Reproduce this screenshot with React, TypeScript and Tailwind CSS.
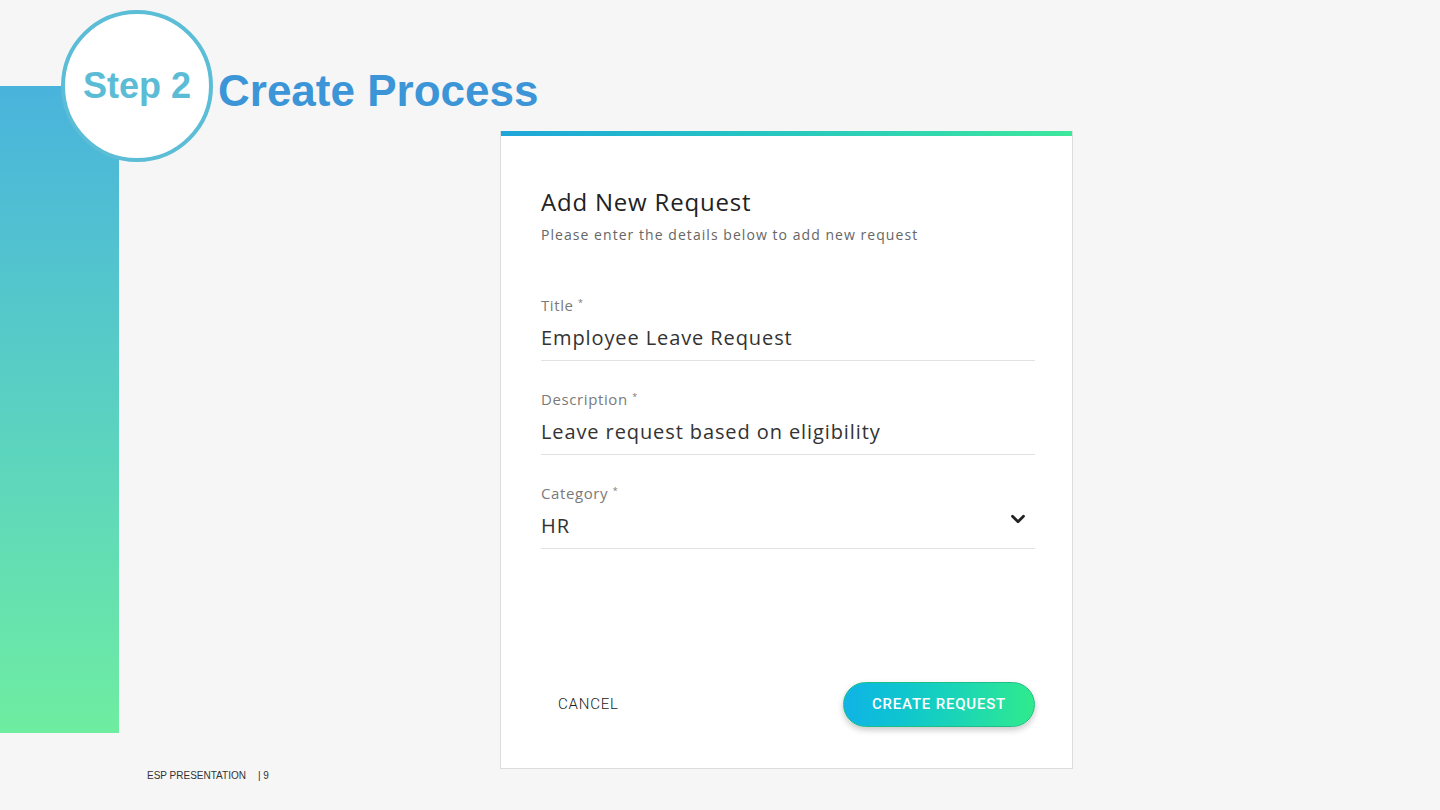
import { FiChevronDown } from "react-icons/fi";

const Field = ({ label, value, select }: { label: string; value: string; select?: boolean }) => {
  return (
    <div className="flex flex-col border-b border-[#e2e2e2] pb-[9px]">
      <span className="text-[15px] leading-[20px] tracking-[0.6px] text-[#7a7a7a]">
        {label} <span className="relative -top-[5px] text-[9px]">*</span>
      </span>
      <div className="mt-[7px] flex items-center justify-between">
        <span className="text-[20px] leading-[26px] tracking-[0.9px] text-[#333]">{value}</span>
        {select && <FiChevronDown className="-mt-[14px] mr-[6px] text-[22px] text-[#222]" strokeWidth={3} />}
      </div>
    </div>
  );
};

export default function App() {
  return (
    <div className="relative flex h-[810px] w-[1440px] overflow-hidden bg-[#f6f6f6] font-['Open_Sans',sans-serif]">
      {/* left gradient bar */}
      <div className="w-[119px] shrink-0 pt-[86px]">
        <div className="h-[647px] w-full bg-gradient-to-b from-[#4ab3dc] to-[#6eeda0]" />
      </div>

      {/* header overlays the bar */}
      <div className="absolute left-[61px] top-[10px] flex items-center font-['Liberation_Sans',Arial,sans-serif] font-bold">
        <div className="flex h-[152px] w-[152px] items-center justify-center rounded-full border-[4px] border-[#5bbdd6] bg-white">
          <span className="text-[36px] text-[#5bbcd6]">Step 2</span>
        </div>
        <span className="ml-[5px] mt-[10px] text-[44px] text-[#3b95d7]">Create Process</span>
      </div>

      <div className="ml-[381px] mt-[131px]">
        <div className="flex h-[638px] w-[573px] flex-col border border-t-0 border-[#dcdcdc] bg-white">
          <div className="h-[5px] w-full bg-gradient-to-r from-[#1fa6d9] to-[#3de79b]" />
          <div className="flex flex-1 flex-col pl-[40px] pr-[37px] pt-[50px]">
            <h1 className="text-[24px] font-normal leading-[32px] tracking-[0.8px] text-[#222]">Add New Request</h1>
            <p className="mt-[7px] text-[14px] leading-[20px] tracking-[1.05px] text-[#666]">
              Please enter the details below to add new request
            </p>

            <div className="mt-[50px] flex flex-col gap-[28px]">
              <Field label="Title" value="Employee Leave Request" />
              <Field label="Description" value="Leave request based on eligibility" />
              <Field label="Category" value="HR" select />
            </div>

            <div className="mt-auto mb-[41px] flex items-center justify-between">
              <button className="ml-[17px] font-['Roboto',sans-serif] text-[15px] font-light tracking-[0.8px] text-[#222]">CANCEL</button>
              <button className="flex h-[45px] w-[192px] items-center justify-center rounded-full border border-[#1ebf86] bg-gradient-to-r from-[#11b3e6] to-[#30ea8c] font-['Roboto',sans-serif] text-[15px] font-medium tracking-[0.8px] text-white shadow-[0_3px_6px_rgba(0,0,0,0.22)]">
                CREATE REQUEST
              </button>
            </div>
          </div>
        </div>
      </div>

      {/* slide footer */}
      <div className="absolute left-[147px] top-[768px] flex items-center font-['Liberation_Sans',Arial,sans-serif] text-[10px] text-[#333]">
        <span>ESP PRESENTATION</span>
        <span className="ml-[12px]">| 9</span>
      </div>
    </div>
  );
}
